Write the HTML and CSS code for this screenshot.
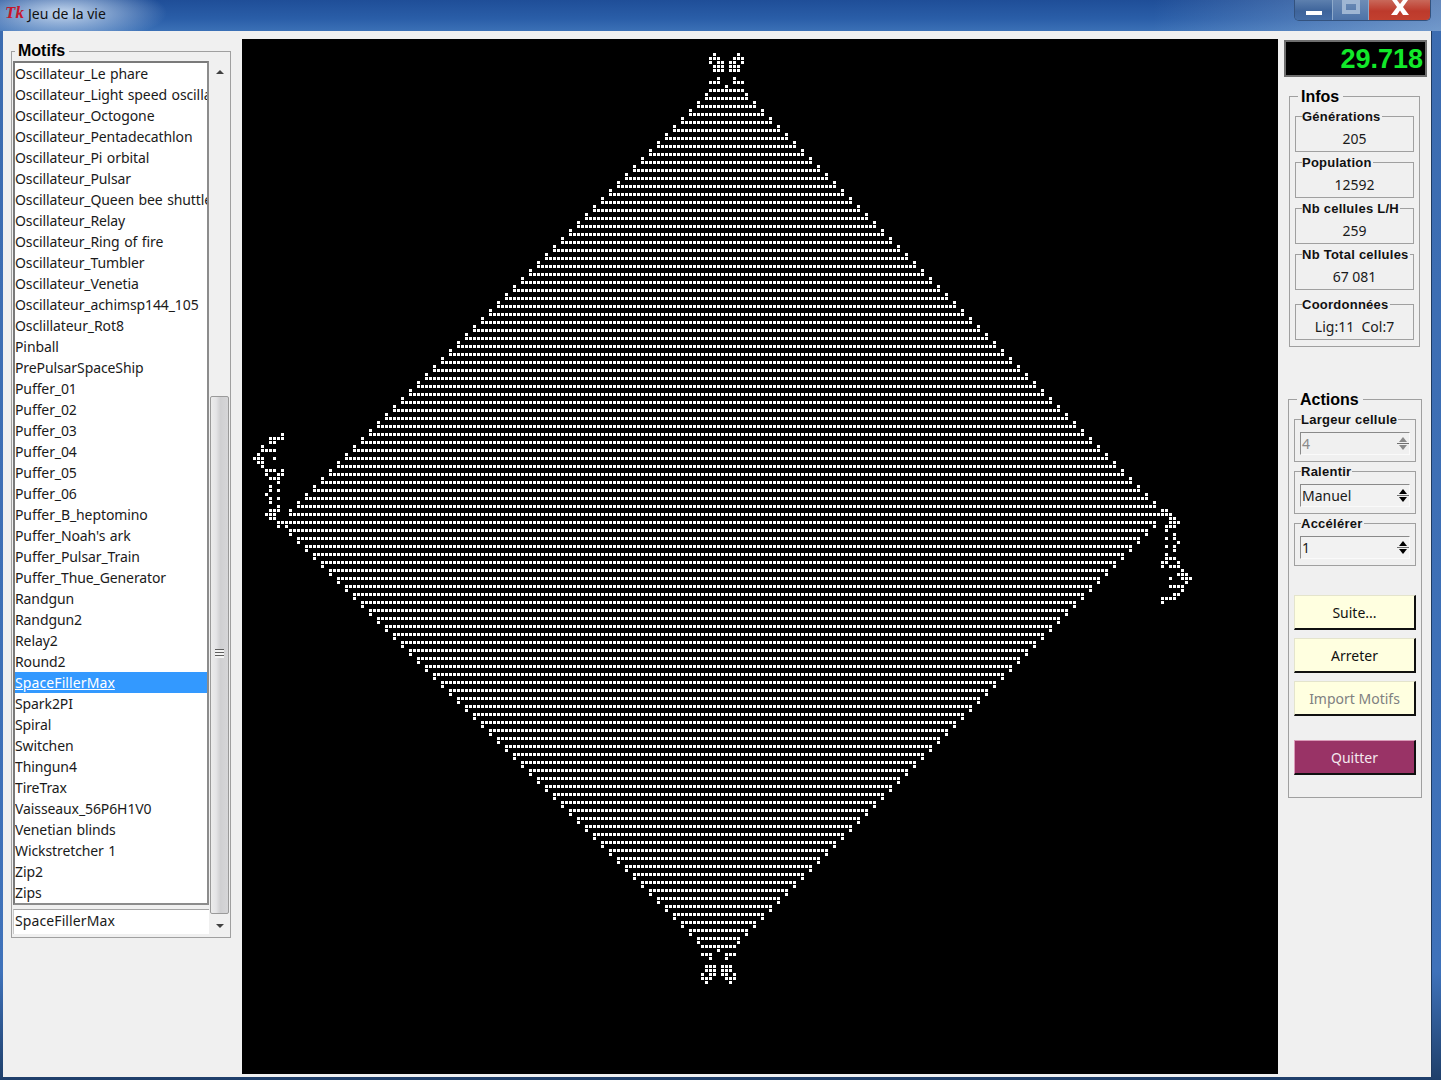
FILE: index.html
```html
<!DOCTYPE html>
<html lang="fr">
<head>
<meta charset="UTF-8">
<title>Jeu de la vie</title>
<link rel="stylesheet" href="styles.css">
</head>
<body>
<header class="titlebar">
    <span class="tk-logo">Tk</span>
    <span class="title">Jeu de la vie</span>
    <div class="win-buttons">
        <div class="win-btn win-min"><span class="min-bar"></span></div>
        <div class="win-btn win-max"><span class="max-box"></span></div>
        <div class="win-btn win-close">
            <svg width="20" height="16" viewBox="0 0 20 16"><path d="M2 0L7 7L1 15H7L10 10.500L13 15H19L13 7L18 0H13L10 4L7 0Z" fill="#fff"/></svg>
        </div>
    </div>
</header>

<main class="client">
    <fieldset class="panel motifs">
        <legend>Motifs</legend>
        <div class="motifs-inner">
            <div class="list-col">
                <ul class="listbox" id="listbox">
                    <li>Oscillateur_Le phare</li>
                    <li>Oscillateur_Light speed oscillator</li>
                    <li>Oscillateur_Octogone</li>
                    <li>Oscillateur_Pentadecathlon</li>
                    <li>Oscillateur_Pi orbital</li>
                    <li>Oscillateur_Pulsar</li>
                    <li>Oscillateur_Queen bee shuttle</li>
                    <li>Oscillateur_Relay</li>
                    <li>Oscillateur_Ring of fire</li>
                    <li>Oscillateur_Tumbler</li>
                    <li>Oscillateur_Venetia</li>
                    <li>Oscillateur_achimsp144_105</li>
                    <li>Osclillateur_Rot8</li>
                    <li>Pinball</li>
                    <li>PrePulsarSpaceShip</li>
                    <li>Puffer_01</li>
                    <li>Puffer_02</li>
                    <li>Puffer_03</li>
                    <li>Puffer_04</li>
                    <li>Puffer_05</li>
                    <li>Puffer_06</li>
                    <li>Puffer_B_heptomino</li>
                    <li>Puffer_Noah's ark</li>
                    <li>Puffer_Pulsar_Train</li>
                    <li>Puffer_Thue_Generator</li>
                    <li>Randgun</li>
                    <li>Randgun2</li>
                    <li>Relay2</li>
                    <li>Round2</li>
                    <li class="selected">SpaceFillerMax</li>
                    <li>Spark2PI</li>
                    <li>Spiral</li>
                    <li>Switchen</li>
                    <li>Thingun4</li>
                    <li>TireTrax</li>
                    <li>Vaisseaux_56P6H1V0</li>
                    <li>Venetian blinds</li>
                    <li>Wickstretcher 1</li>
                    <li>Zip2</li>
                    <li>Zips</li>
                </ul>
                <div class="entry">SpaceFillerMax</div>
            </div>
            <div class="scrollbar">
                <div class="sb-track">
                    <span class="arrow-up"></span>
                </div>
                <div class="sb-thumb"><span class="grip"></span></div>
                <div class="sb-down">
                    <span class="arrow-down"></span>
                </div>
            </div>
        </div>
    </fieldset>

    <div class="board">
        <canvas id="life" width="1036" height="1035"></canvas>
    </div>

    <aside class="side">
        <div class="timer">29.718</div>

        <fieldset class="panel infos">
            <legend>Infos</legend>
            <fieldset class="group">
                <legend>Générations</legend>
                <div class="value">205</div>
            </fieldset>
            <fieldset class="group">
                <legend>Population</legend>
                <div class="value">12592</div>
            </fieldset>
            <fieldset class="group">
                <legend>Nb cellules L/H</legend>
                <div class="value">259</div>
            </fieldset>
            <fieldset class="group">
                <legend>Nb Total cellules</legend>
                <div class="value">67 081</div>
            </fieldset>
            <fieldset class="group coords">
                <legend>Coordonnées</legend>
                <div class="value">Lig:11&nbsp; Col:7</div>
            </fieldset>
        </fieldset>

        <fieldset class="panel actions">
            <legend>Actions</legend>
            <fieldset class="group">
                <legend>Largeur cellule</legend>
                <div class="spin disabled">
                    <span class="spin-text">4</span>
                    <div class="spin-btns"><span class="arrow-up"></span><span class="arrow-down"></span></div>
                </div>
            </fieldset>
            <fieldset class="group">
                <legend>Ralentir</legend>
                <div class="spin">
                    <span class="spin-text">Manuel</span>
                    <div class="spin-btns"><span class="arrow-up"></span><span class="arrow-down"></span></div>
                </div>
            </fieldset>
            <fieldset class="group">
                <legend>Accélérer</legend>
                <div class="spin">
                    <span class="spin-text">1</span>
                    <div class="spin-btns"><span class="arrow-up"></span><span class="arrow-down"></span></div>
                </div>
            </fieldset>
            <button class="btn first" type="button">Suite...</button>
            <button class="btn" type="button">Arreter</button>
            <button class="btn off" type="button">Import Motifs</button>
            <button class="btn quit" type="button">Quitter</button>
        </fieldset>
    </aside>
</main>
<script src="script.js"></script>
</body>
</html>
```
FILE: styles.css
```css
* {
    box-sizing: border-box;
}

html, body {
    height: 1080px;
    overflow: hidden;
}

body {
    margin: 0;
    padding: 0 9px 3px 3px;
    display: flex;
    flex-direction: column;
    font-family: "Noto Sans", "Open Sans", sans-serif;
    font-size: 14px;
    color: #1a1a1a;
    background: linear-gradient(#3c6cb0, #3f72ba 90%, #1f3f6a);
}

/* barre de titre */
.titlebar {
    height: 31px;
    margin: 0 -9px 0 -3px;
    padding-left: 5px;
    display: flex;
    align-items: flex-start;
    background:
        radial-gradient(ellipse 105px 30px at 62px 13px, rgba(205, 222, 242, 0.95), rgba(205, 222, 242, 0) 100%),
        linear-gradient(90deg, rgba(255, 255, 255, 0) 80%, rgba(170, 195, 225, 0.5) 100%),
        linear-gradient(#1f4e98, #2a5ea8 60%, #3b70b6);
}

.tk-logo {
    width: 23px;
    font: italic bold 17px/26px "Liberation Serif", serif;
    color: #c4182c;
}

.title {
    font-size: 14px;
    line-height: 28px;
    color: #111;
}

.win-buttons {
    margin-left: auto;
    margin-right: 10px;
    display: flex;
    height: 21px;
    border: 1px solid #33527e;
    border-top: none;
    border-radius: 0 0 5px 5px;
    overflow: hidden;
}

.win-btn {
    display: flex;
    justify-content: center;
    border-left: 1px solid #8eaacb;
}

.win-min {
    width: 37px;
    border-left: none;
    background: linear-gradient(#5d80ae, #3e649b 55%, #446da6);
}

.win-max {
    width: 36px;
    background: linear-gradient(#6d8cb6, #4d73a8);
}

.win-close {
    width: 62px;
    background: linear-gradient(#c9685a, #bd3a2c 55%, #c2402f);
}

.min-bar {
    width: 16px;
    height: 4px;
    margin-top: 11px;
    background: #fff;
}

.max-box {
    width: 18px;
    height: 14px;
    border: 4px solid #9fb6d3;
}

/* zone cliente */
.client {
    flex: 1;
    padding: 8px 0 0 8px;
    display: flex;
    align-items: flex-start;
    background: #f0f0f0;
    border-right: 1px solid #1f3a60;
}

.panel {
    margin: 0;
    padding: 0;
    border: 1px solid #a0a0a0;
}

.panel > legend {
    height: 18px;
    padding: 0 4px 0 3px;
    font: bold 16px/20px "Liberation Sans", sans-serif;
    color: #000;
}

.motifs {
    width: 220px;
    height: 896px;
    margin-top: 3px;
    padding: 1px 1px 0 1px;
}

.motifs > legend {
    margin-left: 2px;
    line-height: 18px;
}

.motifs-inner {
    display: flex;
}

.list-col {
    width: 196px;
}

.listbox {
    height: 844px;
    margin: 0;
    padding: 0;
    list-style: none;
    background: #fff;
    border: 2px solid #7a7a7a;
    border-right-color: #8c8c8c;
    border-bottom-color: #8c8c8c;
    overflow: hidden;
}

.listbox li {
    height: 21px;
    line-height: 22px;
    letter-spacing: -0.1px;
    word-spacing: 1px;
    white-space: nowrap;
    overflow: hidden;
}

.listbox .selected {
    background: #3399ff;
    color: #fff;
    text-decoration: underline;
    letter-spacing: 0.1px;
}

.entry {
    height: 25px;
    margin-top: 4px;
    padding-left: 1px;
    line-height: 22px;
    letter-spacing: 0.1px;
    background: #fff;
    border-top: 1px solid #a5a5a5;
    border-left: 1px solid #c8c8c8;
}

.scrollbar {
    width: 19px;
    height: 875px;
    margin-left: 1px;
    display: flex;
    flex-direction: column;
}

.sb-track {
    height: 335px;
    padding-top: 9px;
    display: flex;
    justify-content: center;
    align-items: flex-start;
}

.sb-thumb {
    height: 518px;
    display: flex;
    align-items: flex-end;
    justify-content: center;
    border: 1px solid #9a9a9a;
    border-radius: 2px;
    background: linear-gradient(90deg, #ececec, #e4e4e6 30%, #cfcfd1 55%, #d6d6d8);
}

.grip {
    width: 9px;
    height: 9px;
    margin-bottom: 255px;
    background: repeating-linear-gradient(#5f5f5f 0 1px, #f3f3f3 1px 3px);
}

.sb-down {
    flex: 1;
    padding-top: 10px;
    display: flex;
    justify-content: center;
    align-items: flex-start;
}

.arrow-up, .arrow-down {
    display: block;
    width: 0;
    height: 0;
    border-left: 4px solid transparent;
    border-right: 4px solid transparent;
}

.arrow-up {
    border-bottom: 4px solid #404040;
}

.arrow-down {
    border-top: 4px solid #404040;
}

/* le plateau */
.board {
    width: 1036px;
    height: 1035px;
    margin-left: 11px;
    background: #000;
}

.board canvas {
    display: block;
}

/* colonne de droite */
.side {
    width: 143px;
    margin-left: 6px;
    padding-top: 1px;
}

.timer {
    height: 37px;
    padding-right: 2px;
    text-align: right;
    font: bold 27px/34px "Liberation Sans", sans-serif;
    color: #12e92a;
    background: #000;
    border: 2px solid #6e6e6e;
}

.infos {
    width: 131px;
    height: 260px;
    margin: 10px 0 0 5px;
    padding: 0 5px;
}

.infos > legend {
    margin-left: 3px;
}

.actions {
    width: 132px;
    height: 408px;
    margin: 43px 0 0 4px;
    padding: 0 5px;
}

.actions > legend {
    margin-left: 3px;
}

.group {
    margin: 3px 0 0;
    padding: 0;
    min-width: 0;
    border: 1px solid #a0a0a0;
}

.group > legend {
    height: 14px;
    margin-left: 6px;
    padding: 0 1px 0 0;
    font: bold 13px/16px "Liberation Sans", sans-serif;
    letter-spacing: 0.25px;
    color: #111;
}

.infos .group:first-of-type {
    margin-top: 4px;
}

.infos .group.coords {
    margin-top: 7px;
}

.value {
    height: 28px;
    padding-top: 3px;
    line-height: 25px;
    text-align: center;
}

.actions .group {
    margin-top: 2px;
}

.actions .group:first-of-type {
    margin-top: 4px;
}

.spin {
    height: 23px;
    margin: 6px 5px;
    display: flex;
    align-items: center;
    background: #f2f2f2;
    border-top: 1px solid #8a8a8a;
    border-left: 1px solid #8a8a8a;
    border-right: 1px solid #fafafa;
    border-bottom: 1px solid #fafafa;
}

.spin-text {
    flex: 1;
    padding-left: 1px;
}

.spin-btns {
    width: 12px;
    height: 100%;
    display: flex;
    flex-direction: column;
    justify-content: space-around;
    align-items: center;
    padding: 2px 0;
    background: linear-gradient(transparent 10px, #707070 10px, #707070 11px, transparent 11px);
}

.spin-btns .arrow-up {
    border-bottom-color: #000;
    border-bottom-width: 5px;
}

.spin-btns .arrow-down {
    border-top-color: #000;
    border-top-width: 5px;
}

.spin.disabled {
    background: #f0f0f0;
    color: #8a8a8a;
}

.spin.disabled .arrow-up {
    border-bottom-color: #8a8a8a;
}

.spin.disabled .arrow-down {
    border-top-color: #8a8a8a;
}

.btn {
    display: block;
    width: 122px;
    height: 35px;
    margin: 8px 0 0;
    padding: 0;
    font: 14px "Noto Sans", sans-serif;
    color: #111;
    background: #ffffe0;
    border: 1px solid #e4e4cc;
    border-right: 2px solid #101010;
    border-bottom: 2px solid #101010;
}

.btn.first {
    margin-top: 29px;
}

.btn.off {
    color: #808080;
}

.btn.quit {
    margin-top: 24px;
    color: #f4e8ee;
    background: #993366;
    border-color: #d99ab8;
    border-right-color: #101010;
    border-bottom-color: #101010;
}
```
FILE: script.js
```js
// dessine le motif SpaceFillerMax, coordonnees en pixels de l'ecran
const canvas = document.getElementById('life');
const ctx = canvas.getContext('2d');
ctx.fillStyle = '#fff';

function cell(x, y) {
    ctx.fillRect(x - 242, y - 39, 3, 3);
}

function row(x1, x2, y) {
    for (let x = x1; x <= x2; x += 4) cell(x, y);
}

// moitie haute (centre 725)
row(709, 741, 89);
for (let k = 1; k <= 53; k++) {
    const hw = 12 + 8 * k;
    const y = 89 + 8 * k;
    row(725 - hw, 725 + hw, y);
    cell(725 - hw, y - 4);
    cell(725 + hw, y - 4);
}

// moitie basse (centre 717)
for (let k = 54; k <= 106; k++) {
    const hw = 436 - 8 * (k - 54);
    const y = 89 + 8 * k;
    row(717 - hw, 717 + hw, y);
    if (k > 54) cell(717 - hw, y + 4);
    cell(717 + hw, y + 4);
}
row(701, 733, 945);
cell(717, 949);

// pointe du haut
[
    [53, [713, 737]],
    [57, [709, 713, 717, 733, 737, 741]],
    [61, [709, 717, 721, 729, 733, 741]],
    [65, [713, 717, 721, 729, 733, 737]],
    [69, [713, 717, 721, 729, 733, 737]],
    [77, [717, 733]],
    [81, [709, 713, 717, 733, 737, 741]],
    [85, [725]]
].forEach(([y, xs]) => xs.forEach(x => cell(x, y)));

// pointe du bas
[
    [953, [701, 705, 709, 725, 729, 733]],
    [957, [709, 725]],
    [965, [705, 709, 713, 721, 725, 729]],
    [969, [705, 709, 713, 721, 725, 729]],
    [973, [701, 709, 713, 721, 725, 733]],
    [977, [701, 705, 709, 725, 729, 733]],
    [981, [705, 729]]
].forEach(([y, xs]) => xs.forEach(x => cell(x, y)));

// puffer de gauche : colonne 0 = x 245, ligne 0 = y 425
const left = [
    [2, [9]], [3, [6, 7, 8, 9]], [4, [6, 7]], [5, [4]], [6, [4, 5, 6, 7]],
    [7, [3]], [8, [2, 3, 4, 7]], [9, [3, 4]], [10, [4]], [11, [5, 6, 7, 9]],
    [12, [5, 8, 9]], [13, [6, 7, 8]], [14, [8]], [15, [6]], [16, [6, 8]],
    [17, [5]], [18, [6, 8]], [19, [6]], [20, [8]], [21, [6, 7, 8]],
    [22, [5, 6, 7]], [23, [6, 7]], [24, [8]], [25, [8, 10]]
];
left.forEach(([r, cs]) => cs.forEach(c => cell(245 + 4 * c, 425 + 4 * r)));

// puffer de droite : colonne 0 = x 1121, ligne 0 = y 497
const right = [
    [3, [11]], [4, [9, 10, 11, 12]], [5, [12, 13]], [6, [12, 13, 14]], [7, [11, 12, 13]],
    [8, [11]], [9, [13]], [10, [11, 13]], [11, [14]], [12, [11, 13]],
    [13, [13]], [14, [11]], [15, [11, 12, 13]], [16, [10, 11, 14]], [17, [10, 12, 13, 14]],
    [18, [15]], [19, [14, 15, 16]], [20, [12, 15, 16, 17]], [21, [16]],
    [22, [12, 13, 14, 15]], [23, [15]], [24, [13, 14]], [25, [10, 11, 12, 13]], [26, [10]]
];
right.forEach(([r, cs]) => cs.forEach(c => cell(1121 + 4 * c, 497 + 4 * r)));
```
